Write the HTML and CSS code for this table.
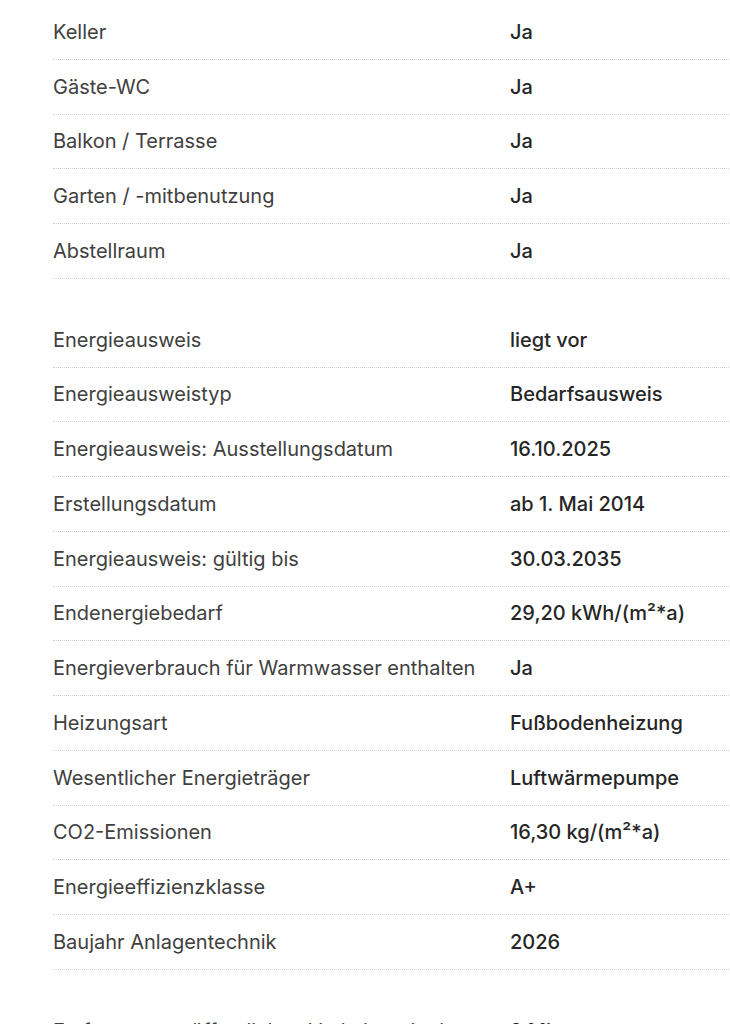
FILE: index.html
```html
<!DOCTYPE html>
<html lang="de">
<head>
<meta charset="utf-8">
<link rel="stylesheet" href="styles.css">
</head>
<body>
<div class="page">
  <dl class="table">
    <div class="row"><dt>Keller</dt><dd>Ja</dd></div>
    <div class="row"><dt>Gäste-WC</dt><dd>Ja</dd></div>
    <div class="row"><dt>Balkon / Terrasse</dt><dd>Ja</dd></div>
    <div class="row"><dt>Garten / -mitbenutzung</dt><dd>Ja</dd></div>
    <div class="row"><dt>Abstellraum</dt><dd>Ja</dd></div>
  </dl>
  <dl class="table">
    <div class="row"><dt>Energieausweis</dt><dd>liegt vor</dd></div>
    <div class="row"><dt>Energieausweistyp</dt><dd>Bedarfsausweis</dd></div>
    <div class="row"><dt>Energieausweis: Ausstellungsdatum</dt><dd>16.10.2025</dd></div>
    <div class="row"><dt>Erstellungsdatum</dt><dd>ab 1. Mai 2014</dd></div>
    <div class="row"><dt>Energieausweis: gültig bis</dt><dd>30.03.2035</dd></div>
    <div class="row"><dt>Endenergiebedarf</dt><dd>29,20 kWh/(m²*a)</dd></div>
    <div class="row"><dt>Energieverbrauch für Warmwasser enthalten</dt><dd>Ja</dd></div>
    <div class="row"><dt>Heizungsart</dt><dd>Fußbodenheizung</dd></div>
    <div class="row"><dt>Wesentlicher Energieträger</dt><dd>Luftwärmepumpe</dd></div>
    <div class="row"><dt>CO2-Emissionen</dt><dd>16,30 kg/(m²*a)</dd></div>
    <div class="row"><dt>Energieeffizienzklasse</dt><dd>A+</dd></div>
    <div class="row"><dt>Baujahr Anlagentechnik</dt><dd>2026</dd></div>
  </dl>
  <dl class="table">
    <div class="row"><dt>Entfernung zu öffentlichen Verkehrsmitteln</dt><dd>2 Min.</dd></div>
  </dl>
</div>
</body>
</html>
```

FILE: styles.css
```css
html, body {
  margin: 0;
  padding: 0;
  background: #ffffff;
  overflow: hidden;
}
.page {
  padding: 5px 0 0 53px;
  font-family: Inter, "Noto Sans", sans-serif;
  width: 914px;
  display: flex;
  flex-direction: column;
  gap: 34px;
}
.table {
  margin: 0;
  display: flex;
  flex-direction: column;
}
.row {
  display: grid;
  grid-template-columns: 457px 457px;
  height: 53.75px;
  align-items: center;
  border-bottom: 1px dotted #d2d2d2;
}
dt {
  margin: 0;
  font-size: 20px;
  font-weight: 400;
  color: #404040;
}
dd {
  margin: 0;
  font-size: 20px;
  font-weight: 500;
  color: #262626;
}
```
